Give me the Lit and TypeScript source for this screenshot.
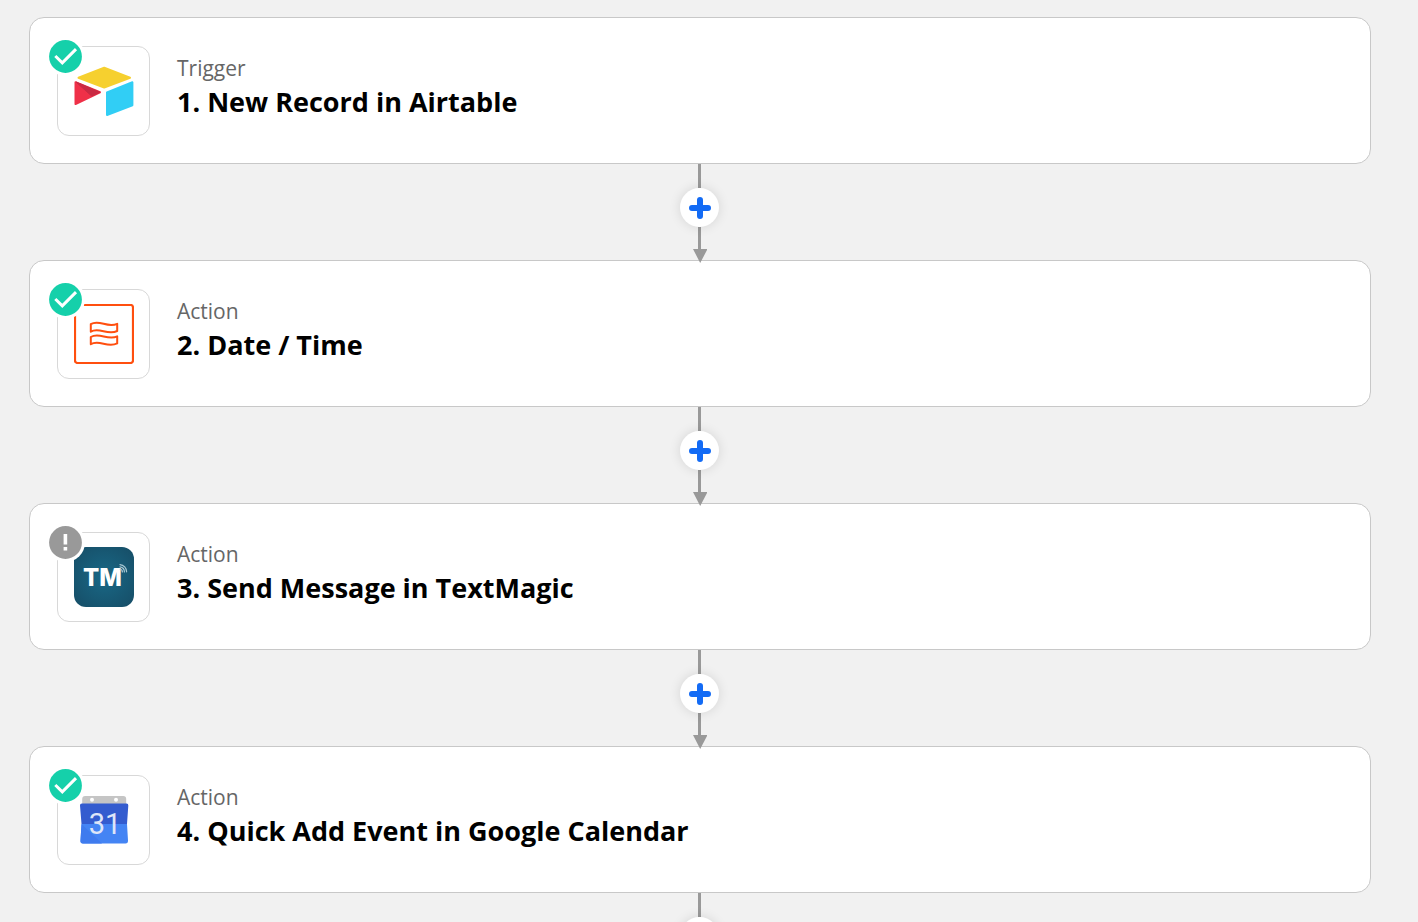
import { LitElement, html, css, svg, type TemplateResult } from "lit";
import { customElement, property } from "lit/decorators.js";

type Status = "done" | "warning";
type App = "airtable" | "datetime" | "textmagic" | "calendar";

interface Step {
  kind: string;
  title: string;
  app: App;
  status: Status;
}

const STEPS: Step[] = [
  { kind: "Trigger", title: "New Record in Airtable", app: "airtable", status: "done" },
  { kind: "Action", title: "Date / Time", app: "datetime", status: "done" },
  { kind: "Action", title: "Send Message in TextMagic", app: "textmagic", status: "warning" },
  { kind: "Action", title: "Quick Add Event in Google Calendar", app: "calendar", status: "done" },
];

const LOGOS: Record<App, TemplateResult> = {
  airtable: svg`
    <g stroke-linejoin="round" stroke-width="2">
      <path d="M4.500 16.800 30.200 6.800 56 16.800 30.200 26.500z" fill="#f6d02f" stroke="#f6d02f"/>
      <path d="M1.500 21.300 26 31.300 1.500 43z" fill="#ef3048" stroke="#ef3048"/>
      <path d="M2 21 26 31.300 17.600 35z" fill="#c92a43" stroke="#c92a43" stroke-width="1"/>
      <path d="M33 31.500 58.400 21.300V44.300L33 54z" fill="#31cef5" stroke="#31cef5"/>
    </g>`,
  datetime: svg`
    <g fill="none" stroke="#ff4f0f" stroke-linejoin="round">
      <rect x="1" y="1" width="58" height="58" rx="2.500" stroke-width="2.200"/>
      <g stroke-width="2">
        <path d="M16.800 20.200C25.200 15 33.500 24.500 43.200 19.800V27C33.500 32 25.200 22.400 16.800 27.600z"/>
        <path d="M16.800 33C25.200 27.800 33.500 36.800 43.200 32.400V39.400C33.500 44.400 25.200 35 16.800 40.200z"/>
      </g>
    </g>`,
  textmagic: svg`
    <defs>
      <radialGradient id="deep" cx=".5" cy=".5" r=".7">
        <stop offset="0" stop-color="#196886"/>
        <stop offset="1" stop-color="#164d66"/>
      </radialGradient>
    </defs>
    <rect width="60" height="60" rx="12" fill="url(#deep)"/>
    <text x="9" y="39.300" font-family="Inter, sans-serif" font-weight="800" font-size="24" fill="#fff">TM</text>
    <g fill="none" stroke="#a9c8d3" stroke-width="1.200" stroke-linecap="round">
      <path d="M46 22a3 3 0 0 1 2.400 3"/>
      <path d="M46 19.800a5.200 5.200 0 0 1 4.400 5.200"/>
      <path d="M46 17.600a7.200 7.200 0 0 1 6.600 7.200"/>
    </g>`,
  calendar: svg`
    <path d="M8.200 9a3 3 0 0 1 3-3h38a3 3 0 0 1 3 3v6h-44z" fill="#c5c5c5"/>
    <circle cx="18" cy="9.800" r="2" fill="#fff"/>
    <circle cx="42" cy="9.800" r="2" fill="#fff"/>
    <path d="M8 13.500h44.500q2 0 1.800 2L53 34H7.500L6 15.500q-.2-2 2-2z" fill="#345ccf"/>
    <path d="M7.500 34H53l1 16.500q.2 3-2.500 3h-42.500q-2.800 0-2.500-3z" fill="#4484f4"/>
    <path d="M7.500 34 28 53.500H9q-2.800 0-2.500-3z" fill="#3f7bee"/>
    <text x="31" y="43.600" text-anchor="middle" font-family="Roboto, sans-serif" font-weight="400" font-size="29" fill="#dfe6f8">31</text>`,
};

@customElement("step-card")
export class StepCard extends LitElement {
  @property({ attribute: false }) step!: Step;
  @property({ type: Number }) position = 1;

  static styles = css`
    :host {
      display: block;
    }
    .card {
      display: flex;
      align-items: flex-start;
      gap: 27px;
      box-sizing: border-box;
      padding: 28px 27px 27px;
      background: #fff;
      border: 1px solid #c8c8c8;
      border-radius: 15px;
    }
    .logo {
      position: relative;
      flex: none;
      display: flex;
      align-items: center;
      justify-content: center;
      box-sizing: border-box;
      width: 93px;
      height: 90px;
      padding-left: 1px;
      border: 1px solid #d8d8d8;
      border-radius: 12px;
    }
    .picture {
      display: block;
      width: 60px;
      height: 60px;
    }
    .badge {
      position: absolute;
      top: -10px;
      left: -12px;
      width: 39px;
      height: 39px;
    }
    .text {
      padding-top: 7px;
      min-width: 0;
    }
    .kind {
      margin: 0;
      font-size: 21px;
      line-height: 30px;
      color: #666;
    }
    .title {
      margin: 0;
      font-size: 27px;
      font-weight: 700;
      line-height: 38px;
      color: #000;
    }
  `;

  private badge(status: Status) {
    const done = status === "done";
    return html`
      <svg class="badge" viewBox="0 0 39 39" role="img" aria-label=${done ? "Complete" : "Needs attention"}>
        <circle cx="19.500" cy="19.500" r="19.500" fill="#fff" />
        <circle cx="19.500" cy="19.500" r="16.400" fill=${done ? "#15d0aa" : "#999"} />
        ${done
          ? svg`<path d="M9.300 19 16.300 25.800 30 12.100" fill="none" stroke="#fff" stroke-width="3"/>`
          : svg`<path d="M17.600 11h3.600v10.500h-3.600zM17.600 24h3.600v3.600h-3.600z" fill="#fff"/>`}
      </svg>
    `;
  }

  render() {
    const { kind, title, app, status } = this.step;
    return html`
      <article class="card">
        <div class="logo">
          <svg class="picture" viewBox="0 0 60 60" aria-hidden="true">${LOGOS[app]}</svg>
          ${this.badge(status)}
        </div>
        <div class="text">
          <p class="kind">${kind}</p>
          <h2 class="title">${this.position}. ${title}</h2>
        </div>
      </article>
    `;
  }
}

@customElement("step-connector")
export class StepConnector extends LitElement {
  static styles = css`
    :host {
      display: flex;
      flex-direction: column;
      align-items: center;
      position: relative;
      height: 96px;
      padding-right: 1px;
    }
    .stem {
      flex: none;
      width: 3px;
      height: 24px;
      background: #999;
    }
    .add {
      flex: none;
      display: flex;
      align-items: center;
      justify-content: center;
      width: 39px;
      height: 39px;
      padding: 0;
      border: 0;
      border-radius: 50%;
      background: #fff;
      box-shadow: 0 0 12px rgba(0, 0, 0, 0.12);
      cursor: pointer;
      z-index: 1;
    }
    .plus {
      width: 23px;
      height: 23px;
    }
    .arrow {
      flex: none;
      width: 15px;
      height: 36px;
    }
  `;

  render() {
    return html`
      <span class="stem"></span>
      <button class="add" type="button" aria-label="Add a step">
        <svg class="plus" viewBox="0 0 23 23" aria-hidden="true">
          <path d="M12 4v16M4 12h16" fill="none" stroke="#136bf5" stroke-width="6" stroke-linecap="round" />
        </svg>
      </button>
      <svg class="arrow" viewBox="0 0 15 36" aria-hidden="true">
        <path d="M6 0h3v22h6.500L8.200 36 1 22H6z" fill="#999" />
      </svg>
    `;
  }
}

@customElement("app-root")
export class AppRoot extends LitElement {
  static styles = css`
    :host {
      display: block;
      box-sizing: border-box;
      height: 100vh;
      overflow: hidden;
      padding: 17px 47px 0 29px;
      background: #f1f1f1;
      font-family: "Open Sans", "Noto Sans", sans-serif;
    }
  `;

  render() {
    return html`
      <main>
        ${STEPS.map(
          (step, i) => html`
            <step-card .step=${step} .position=${i + 1}></step-card>
            <step-connector></step-connector>
          `,
        )}
      </main>
    `;
  }
}
